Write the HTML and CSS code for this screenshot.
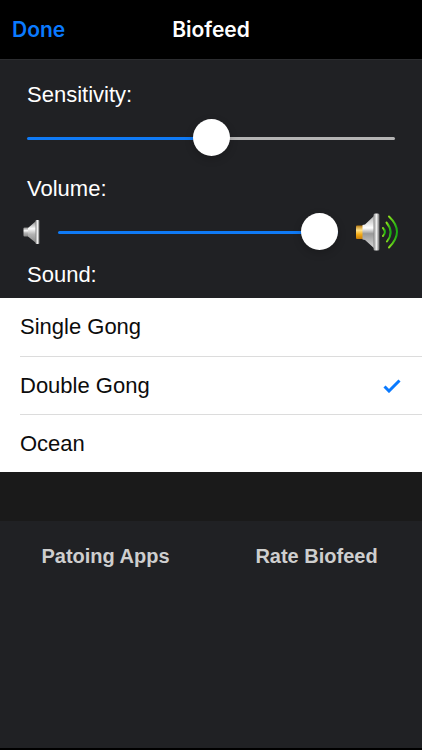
FILE: index.html
```
<!DOCTYPE html>
<html lang="en">
<head>
<meta charset="utf-8">
<meta name="viewport" content="width=device-width, initial-scale=1">
<title>Biofeed</title>
<link rel="stylesheet" href="styles.css">
</head>
<body>
<header class="navbar">
  <button class="done" type="button">Done</button>
  <h1 class="title">Biofeed</h1>
</header>
<main class="content">
  <form class="settings">
    <div class="panel">
      <label class="label" for="sensitivity">Sensitivity:</label>
      <div class="slider-row">
        <input class="slider slider-half" id="sensitivity" type="range" min="0" max="100" value="50">
      </div>
      <label class="label" for="volume">Volume:</label>
      <div class="slider-row slider-row-volume">
        <svg class="speaker-low" viewBox="0 0 18 26" aria-hidden="true">
          <defs>
            <linearGradient id="metal" x1="0" y1="0" x2="0" y2="1">
              <stop offset="0" stop-color="#888"/>
              <stop offset=".35" stop-color="#fafafa"/>
              <stop offset=".6" stop-color="#b4b4b4"/>
              <stop offset="1" stop-color="#888"/>
            </linearGradient>
            <linearGradient id="rim" x1="0" y1="0" x2="1" y2="0">
              <stop offset="0" stop-color="#888"/>
              <stop offset=".5" stop-color="#f0f0f0"/>
              <stop offset="1" stop-color="#666"/>
            </linearGradient>
          </defs>
          <rect x="0.5" y="8.500" width="5.500" height="9" rx="1" fill="url(#metal)"/>
          <path d="M5 9L13 2V24L5 17.500Z" fill="url(#metal)"/>
          <rect x="12.500" y="1" width="4" height="24" rx="1" fill="url(#rim)"/>
        </svg>
        <input class="slider slider-full" id="volume" type="range" min="0" max="100" value="100">
        <svg class="speaker-high" viewBox="0 0 44 38" aria-hidden="true">
          <defs>
            <linearGradient id="gold" x1="0" y1="0" x2="0" y2="1">
              <stop offset="0" stop-color="#b87a12"/>
              <stop offset=".35" stop-color="#ffe28a"/>
              <stop offset=".65" stop-color="#f5ad18"/>
              <stop offset="1" stop-color="#c77c08"/>
            </linearGradient>
            <linearGradient id="cone" x1="0" y1="0" x2="0" y2="1">
              <stop offset="0" stop-color="#aaa"/>
              <stop offset=".38" stop-color="#fff"/>
              <stop offset=".55" stop-color="#999"/>
              <stop offset="1" stop-color="#ddd"/>
            </linearGradient>
            <linearGradient id="wave" x1="0" y1="0" x2="1" y2="0">
              <stop offset="0" stop-color="#8be01c"/>
              <stop offset="1" stop-color="#18aa12"/>
            </linearGradient>
          </defs>
          <rect x="1" y="12.500" width="8" height="13.500" rx="1" fill="url(#gold)"/>
          <path d="M7.500 12L10 11.500L20 2V36L10 27L7.500 26.500Z" fill="url(#cone)"/>
          <rect x="18.500" y="0.500" width="6" height="37" rx="1.500" fill="url(#rim)"/>
          <g fill="none" stroke="url(#wave)" stroke-width="2" stroke-linecap="round">
            <path d="M28 15Q32 19 28 23"/>
            <path d="M31.500 9.500Q39.500 19 32 28.500"/>
            <path d="M34 3.500Q50 18.500 34 34.500"/>
          </g>
        </svg>
      </div>
      <p class="label" id="sound-label">Sound:</p>
    </div>
    <div class="sounds" role="radiogroup" aria-labelledby="sound-label">
      <label class="sound">
        <input class="sound-input" type="radio" name="sound" value="single">
        <span>Single Gong</span>
        <svg class="check" viewBox="0 0 18 14" aria-hidden="true"><path d="M1.500 7.500L6 12L16.500 1.500"/></svg>
      </label>
      <label class="sound">
        <input class="sound-input" type="radio" name="sound" value="double" checked>
        <span>Double Gong</span>
        <svg class="check" viewBox="0 0 18 14" aria-hidden="true"><path d="M1.500 7.500L6 12L16.500 1.500"/></svg>
      </label>
      <label class="sound">
        <input class="sound-input" type="radio" name="sound" value="ocean">
        <span>Ocean</span>
        <svg class="check" viewBox="0 0 18 14" aria-hidden="true"><path d="M1.500 7.500L6 12L16.500 1.500"/></svg>
      </label>
    </div>
  </form>
  <nav class="links">
    <a class="link" href="#apps">Patoing Apps</a>
    <a class="link" href="#rate">Rate Biofeed</a>
  </nav>
</main>
</body>
</html>
```
FILE: styles.css
```
* {
  box-sizing: border-box;
}

body {
  margin: 0;
  min-height: 100vh;
  display: flex;
  flex-direction: column;
  background: #000;
  color: #fff;
  font-family: "Liberation Sans", Arial, sans-serif;
  font-size: 22px;
  line-height: 28px;
}

.navbar {
  display: grid;
  grid-template-columns: 1fr auto 1fr;
  align-items: center;
  height: 59px;
  padding: 0 12px;
  font-family: Inter, "Liberation Sans", sans-serif;
}

.done {
  justify-self: start;
  padding: 0;
  border: 0;
  background: none;
  color: #0a7aff;
  font: inherit;
  font-size: 21px;
  font-weight: 600;
}

.title {
  margin: 0;
  font-size: 21px;
  font-weight: 600;
}

.content {
  flex: 1;
  display: flex;
  flex-direction: column;
  margin-bottom: 2px;
  background: #202124;
  border-top: 1px solid #2c2d30;
}

.panel {
  padding: 21px 27px 9px;
}

.label {
  display: block;
  margin: 0;
}

.slider-row {
  display: flex;
  align-items: center;
  height: 38px;
  margin: 10px 0 18px;
}

.slider-row-volume {
  gap: 17px;
  margin: 10px -4px 10px;
}

.slider {
  flex: 1;
  min-width: 0;
  height: 38px;
  margin: 0;
  appearance: none;
  background: none;
}

.slider::-webkit-slider-runnable-track {
  height: 3px;
  border-radius: 2px;
  background: #b4b4b4;
}

.slider-half::-webkit-slider-runnable-track {
  background: linear-gradient(to right, #0f7af5 50%, #b4b4b4 50%);
}

.slider-full::-webkit-slider-runnable-track {
  background: #0f7af5;
}

.slider::-webkit-slider-thumb {
  appearance: none;
  width: 37px;
  height: 37px;
  margin-top: -18px;
  border-radius: 50%;
  background: #fff;
  box-shadow: 0 3px 8px rgba(0, 0, 0, 0.2);
}

.speaker-low {
  width: 18px;
  height: 26px;
}

.speaker-high {
  width: 44px;
  height: 38px;
}

.sounds {
  background: #fff;
  color: #0c0c0c;
}

.sound {
  display: flex;
  align-items: center;
  justify-content: space-between;
  height: 58px;
  margin-left: 20px;
  padding-right: 21px;
}

.sound + .sound {
  border-top: 1px solid #dcdcdc;
}

.sound-input {
  position: absolute;
  opacity: 0;
}

.check {
  width: 18px;
  height: 14px;
  fill: none;
  stroke: #0a7aff;
  stroke-width: 3;
  visibility: hidden;
}

.sound-input:checked ~ .check {
  visibility: visible;
}

.links {
  display: grid;
  grid-template-columns: 1fr 1fr;
  padding-top: 21px;
  border-top: 49px solid #1a1a1a;
}

.link {
  color: #cecece;
  font-size: 20px;
  font-weight: 700;
  text-align: center;
  text-decoration: none;
}
```
